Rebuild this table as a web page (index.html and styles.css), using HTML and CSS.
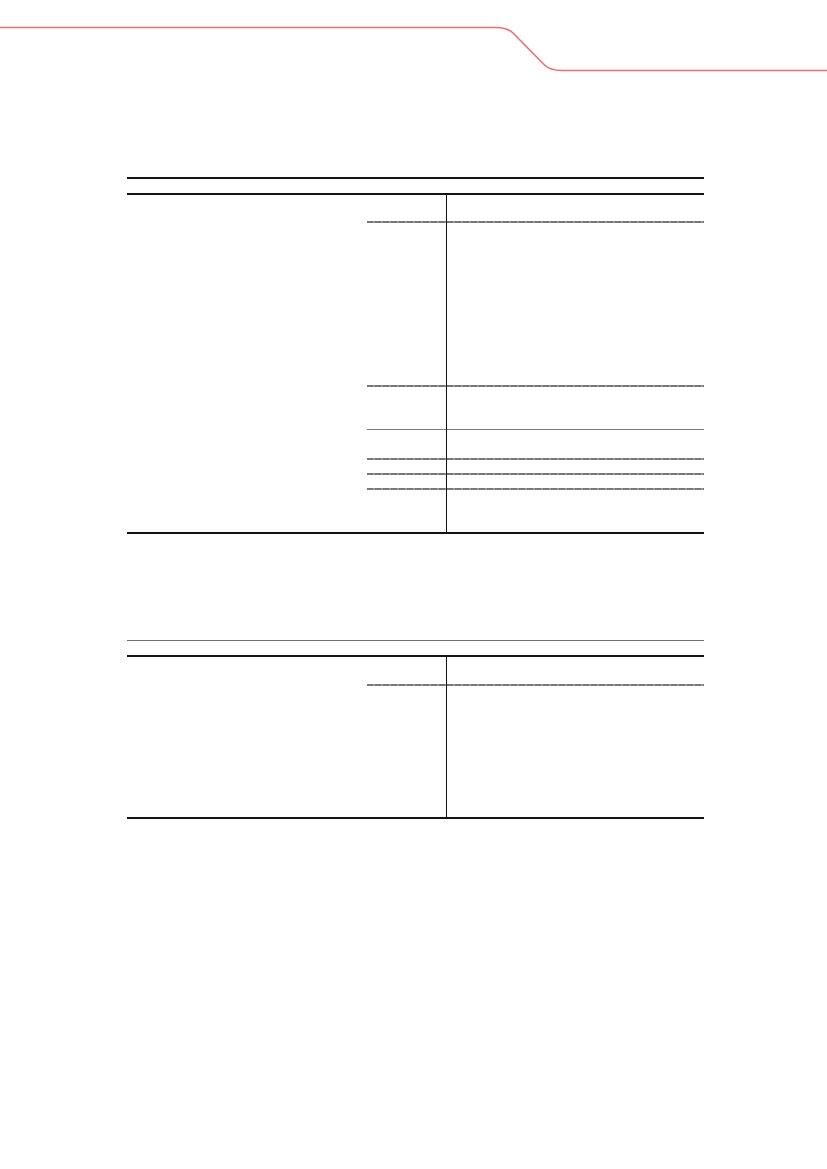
FILE: index.html
```html
<!DOCTYPE html>
<html lang="en">
<head>
<meta charset="utf-8">
<title>Page</title>
<link rel="stylesheet" href="styles.css">
</head>
<body>
<div class="page">
  <svg class="header-curve" width="827" height="80" viewBox="0 0 827 80" aria-hidden="true">
    <path d="M0,27.5 H496 Q508,27.5 514,34 L544,64.5 Q550,70.5 562,70.5 H827" fill="none" stroke="#ef6c70" stroke-width="1.6"/>
  </svg>

  <section class="table table-one">
    <div class="table-head"></div>
    <div class="body">
      <div class="span-col"></div>
      <div class="rows rows-one">
        <div class="cell"></div>
        <div class="sep dashed"></div>
        <div class="cell"></div>
        <div class="sep dashed"></div>
        <div class="cell"></div>
        <div class="sep solid"></div>
        <div class="cell"></div>
        <div class="sep dashed"></div>
        <div class="cell"></div>
        <div class="sep dashed"></div>
        <div class="cell"></div>
        <div class="sep dashed"></div>
        <div class="cell"></div>
      </div>
    </div>
  </section>

  <section class="table table-two">
    <div class="table-head"></div>
    <div class="body">
      <div class="span-col"></div>
      <div class="rows rows-two">
        <div class="cell"></div>
        <div class="sep dashed"></div>
        <div class="cell"></div>
      </div>
    </div>
  </section>
</div>
</body>
</html>
```

FILE: styles.css
```css
html, body {
  margin: 0;
  padding: 0;
  background: #ffffff;
  font-family: "Liberation Sans", Arial, sans-serif;
}

.page {
  width: 827px;
  min-height: 1169px;
  display: flex;
  flex-direction: column;
}

.header-curve {
  display: block;
}

.table {
  margin-left: 127px;
  width: 577px;
  border-bottom: 2px solid #141414;
}

.table-one {
  margin-top: 97px;
  border-top: 2px solid #141414;
}

.table-two {
  margin-top: 106px;
  border-top: 1px solid #6e6e6e;
}

.table-head {
  height: 14px;
  border-bottom: 2px solid #141414;
}

.body {
  display: grid;
  grid-template-columns: 240px 337px;
}

.rows {
  display: grid;
  background: linear-gradient(#111111, #111111) 79px 0 / 1px 100% no-repeat;
}

.rows-one {
  grid-template-rows: 26px 2px 162px 2px 42px 1px 28px 2px 13px 2px 13px 2px 42px;
}

.rows-two {
  grid-template-rows: 27px 2px 131px;
}

.sep.dashed {
  background:
    linear-gradient(#111111, #111111) 79px 0 / 1px 100% no-repeat,
    repeating-linear-gradient(90deg, #767676 0 6px, #9a9a9a 6px 8px);
}

.sep.solid {
  background:
    linear-gradient(#111111, #111111) 79px 0 / 1px 100% no-repeat,
    #7a7a7a;
}
```
